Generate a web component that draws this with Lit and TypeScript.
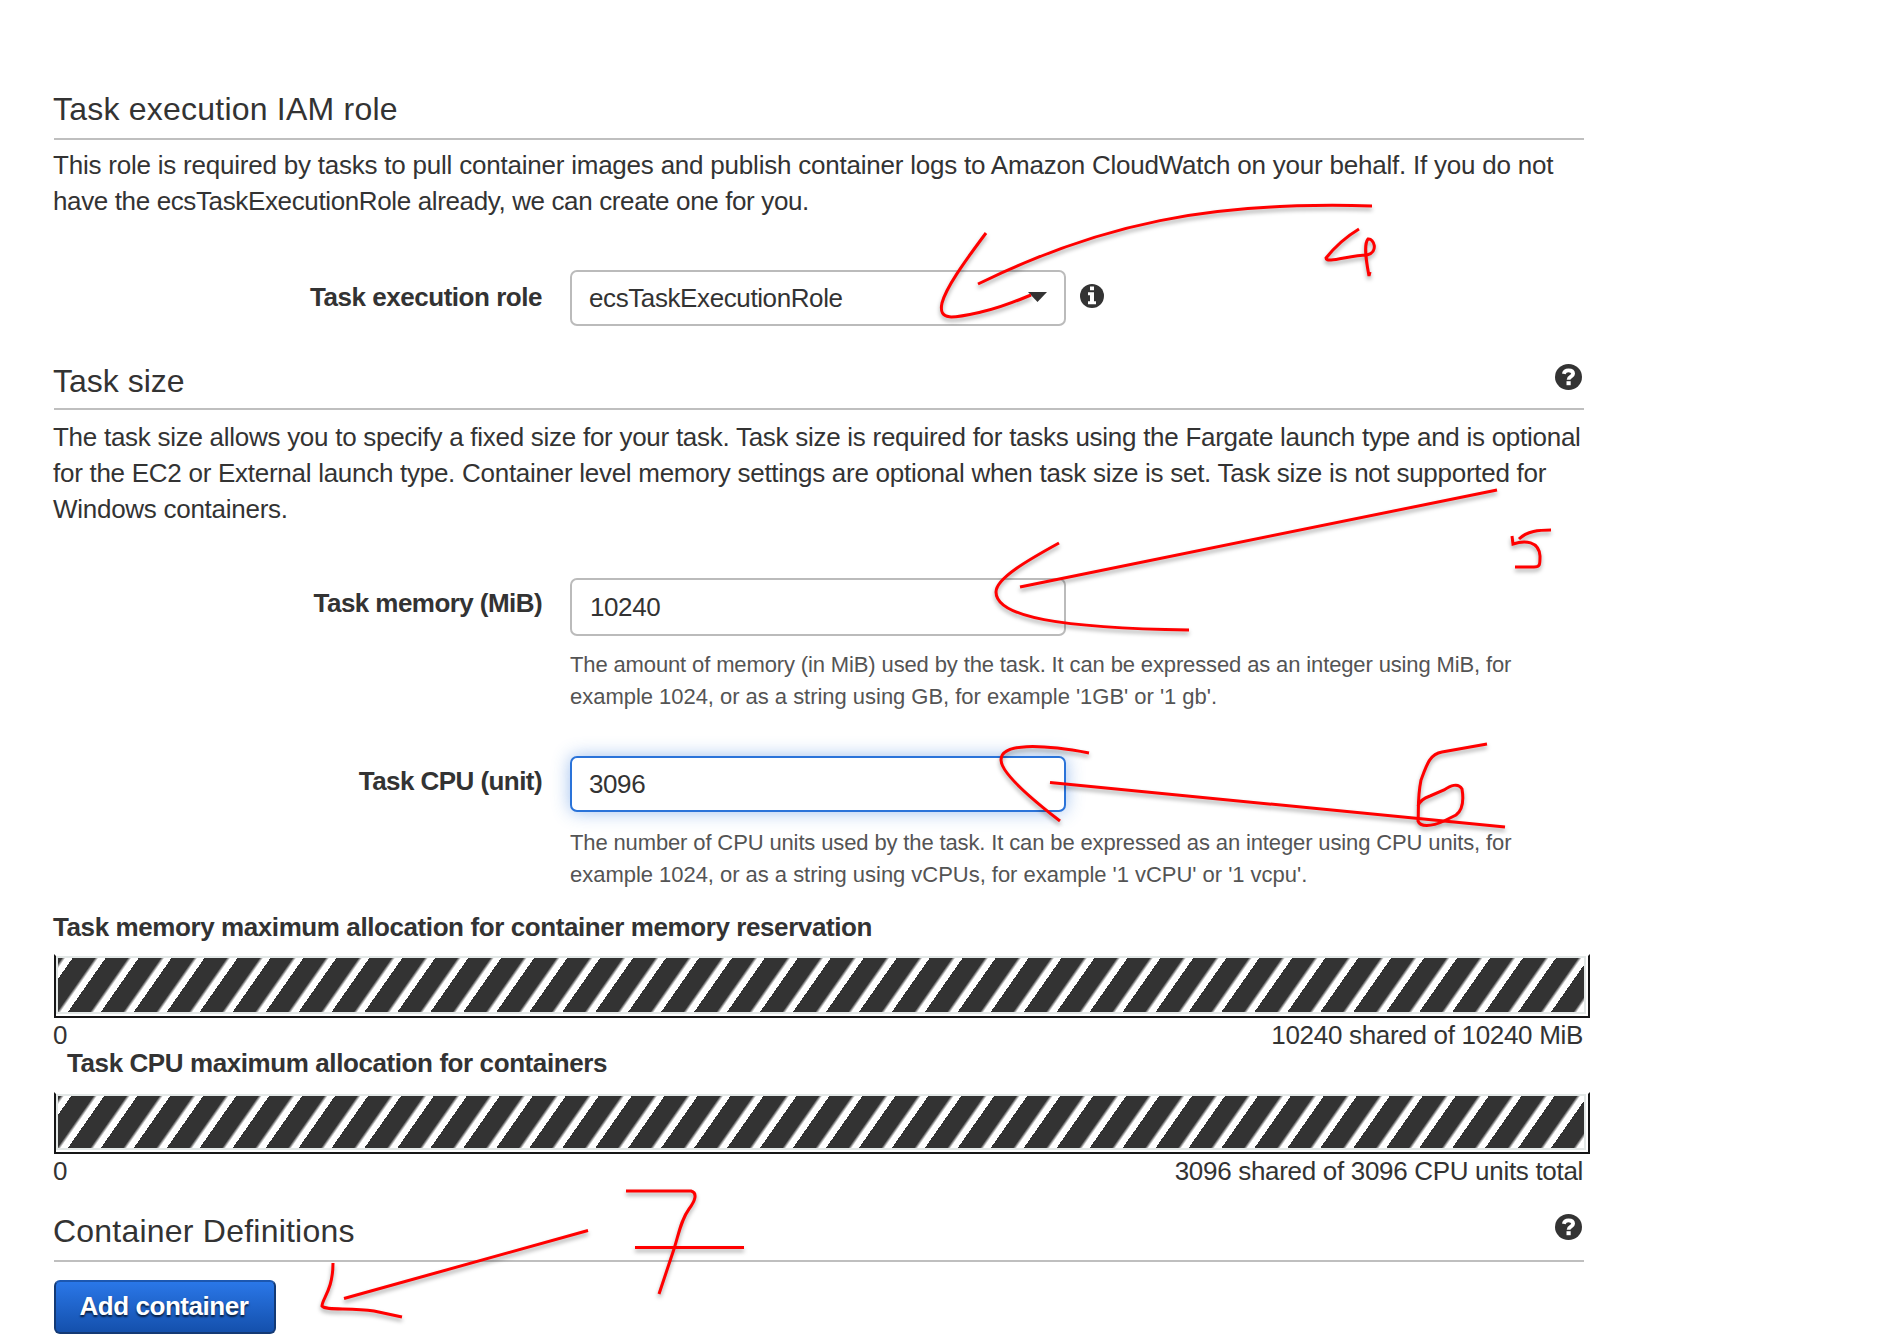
import { LitElement, html, css, svg } from "lit";
import { customElement, property } from "lit/decorators.js";

const infoIcon = html`<svg class="info" viewBox="0 0 24 24" width="24" height="24" aria-hidden="true">
  <circle cx="12" cy="12" r="12" fill="#333" />
  <path fill="#fff" d="M10 2.6h4v3.7h-4zM8 8.2h6v9h2v3H8v-3h2v-6H8z" />
</svg>`;

const helpIcon = html`<svg class="help-icon" viewBox="0 0 27 26" width="27" height="26" aria-hidden="true">
  <ellipse cx="13.5" cy="13" rx="13.500" ry="13" fill="#333" />
  <path fill="none" stroke="#fff" stroke-width="3.8" d="M8.800 9.800C9.300 7.500 11 6.300 13.500 6.300c2.700 0 4.600 1.300 4.600 3.400 0 3.200-4.500 2.800-4.500 6" />
  <path fill="#fff" d="M11.500 17.200h4.200v4h-4.200z" />
</svg>`;

/** Section title with a rule beneath it and an optional help icon. */
@customElement("section-heading")
class SectionHeading extends LitElement {
  @property() label = "";
  @property({ type: Boolean }) help = false;
  static styles = css`
    :host { display: block; }
    .bar {
      display: flex; justify-content: space-between; align-items: flex-start;
      height: var(--bar-height, 47px); box-sizing: border-box; border-bottom: 2px solid #bfbfbf;
    }
    .title { margin: 0 0 0 -1px; font-weight: 400; font-size: 32px; line-height: 32px; letter-spacing: var(--title-spacing, 0.22px); white-space: nowrap; }
    .help-icon { margin: -1px 2px 0 0; }
  `;
  render() {
    return html`<div class="bar"><h2 class="title">${this.label}</h2>${this.help ? helpIcon : ""}</div>`;
  }
}

/** Striped allocation gauge with start and end captions. */
@customElement("allocation-gauge")
class AllocationGauge extends LitElement {
  @property() start = "0";
  @property() end = "";
  static styles = css`
    :host { display: block; }
    .frame {
      box-sizing: border-box; width: 1536px; height: var(--gauge-height, 64px);
      border: 2px solid #161617; border-top: 2px solid transparent; padding: 0 2px 2px 0;
    }
    .fill {
      box-sizing: border-box; height: 100%; border: 2px solid #e3e8e7;
      background: repeating-linear-gradient(-55deg, #fff 0, #fff 5.800px, #333 8.800px, #333 27px) padding-box;
    }
    .caption { display: flex; justify-content: space-between; width: 1530px; margin: -1px 0 0 -1px; line-height: 36px; letter-spacing: -0.31px; }
  `;
  render() {
    return html`<div class="frame"><div class="fill"></div></div>
      <div class="caption"><span>${this.start}</span><span>${this.end}</span></div>`;
  }
}

const strokes = [
  "M986 233C962 265 946 288 942 303C938 322 954 318 981 312C996 309 1012 303 1031 295",
  "M978 284C1100 224 1210 201 1372 206",
  "M1359 229C1344 238 1334 248 1326 258C1326 264 1350 255 1367 255C1379 252 1374 238 1368 239C1363 245 1367 265 1369 276L1370 272",
  "M1059 543C1030 559 996 578 996 592C996 617 1060 628 1189 630",
  "M1020 587L1497 490",
  "M1512 536L1513 544C1525 540 1539 541 1540 556C1540 565 1540 567 1534 567L1515 567M1519 539C1527 531 1539 530 1551 530",
  "M1089 753C1040 744 1001 743 1001 760C1001 772 1025 794 1060 821",
  "M1050 782.500L1505 827",
  "M1487 744L1442 752C1430 754 1427 764 1421 780C1417 800 1419 812 1418 821C1420 827 1431 827 1444 821L1456 815C1465 808 1463 795 1462 789C1458 782 1450 786 1444 790L1430 796C1421 799 1419 803 1418 806",
  "M626 1191L691 1191C698 1193 695 1201 689 1209C681 1220 679 1233 674 1249L659 1294",
  "M635 1247.500L744 1247.500",
  "M333 1263C333 1290 322 1299 322 1306C326 1311 350 1307 374 1311L402 1317",
  "M344 1298.500L588 1230.500",
];

@customElement("app-root")
class AppRoot extends LitElement {
  static styles = css`
    :host {
      display: block; position: relative; width: 1904px; height: 1340px; overflow: hidden;
      background: #fff; color: #333;
      font-family: "Liberation Sans", Arial, sans-serif; font-size: 26px; line-height: 36px;
    }
    .page { display: flow-root; padding: 93px 320px 0 54px; }
    .size-heading { margin-top: 39px; --bar-height: 45px; --title-spacing: 0px; }
    .container-heading { margin-top: 26px; }
    .copy { margin: 7px -20px 0 -1px; white-space: nowrap; }
    .copy.size { margin-top: 9px; }
    .line { display: block; }
    .ls1 { letter-spacing: -0.22px; }
    .ls2 { letter-spacing: -0.37px; }
    .ls3 { letter-spacing: -0.273px; }
    .row { display: grid; grid-template-columns: 488px 496px auto; column-gap: 28px; align-items: start; }
    .row.role { margin-top: 51px; }
    .row.memory { margin-top: 51px; }
    .row.cpu { margin-top: 43px; }
    .label { font-weight: 700; text-align: right; padding-top: 9px; white-space: nowrap; letter-spacing: -0.47px; }
    .label.memory-label, .label.cpu-label { padding-top: 7px; }
    .label.cpu-label, .label.memory-label { letter-spacing: -0.56px; }
    .field {
      box-sizing: border-box; height: 56px; border: 2px solid #bbb; border-radius: 7px;
      padding: 0 17px; display: flex; align-items: center; justify-content: space-between; background: #fff;
      letter-spacing: -0.4px;
    }
    .field.tall { height: 58px; padding-left: 18px; }
    .field.focus { border-color: #2a73d9; box-shadow: 0 0 18px rgba(42, 115, 217, 0.45); }
    .caret { width: 19px; height: 10px; margin-top: -3px; }
    .row .info { margin: 14px 0 0 -14px; }
    .hint { margin: 13px -400px 0 0; color: #545454; font-size: 22px; line-height: 32px; white-space: nowrap; letter-spacing: -0.03px; }
    .hint .first { letter-spacing: -0.13px; }
    .cpu .hint { margin-top: 15px; }
    .meter { font-weight: 700; margin: 18px 0 9px -1px; letter-spacing: -0.41px; }
    .meter.cpu-meter { margin: -8px 0 11px 13px; }
    .cpu-gauge { --gauge-height: 62px; }
    .add {
      display: block; box-sizing: border-box; width: 222px; height: 54px; margin-top: 18px; padding: 0;
      border: 2px solid #143a75; border-top-color: #1c57b0; border-radius: 6px;
      background: linear-gradient(#2a77e8, #1450ac); color: #fff; letter-spacing: -0.45px;
      font: 700 26px/48px "Liberation Sans", Arial, sans-serif; text-shadow: 0 2px 2px rgba(0, 0, 0, 0.7);
      padding: 0 2px 2px 0;
    }
    .ink { position: absolute; left: 0; top: 0; pointer-events: none; filter: drop-shadow(0 3px 2px rgba(0, 0, 0, 0.35)); }
  `;
  render() {
    return html`
      <main class="page">
        <section-heading label="Task execution IAM role"></section-heading>
        <p class="copy">
          <span class="line ls1">This role is required by tasks to pull container images and publish container logs to Amazon CloudWatch on your behalf. If you do not</span>
          <span class="line ls2">have the ecsTaskExecutionRole already, we can create one for you.</span>
        </p>
        <div class="row role">
          <span class="label">Task execution role</span>
          <div class="field"><span>ecsTaskExecutionRole</span>
            <svg class="caret" viewBox="0 0 19 10"><path fill="#333" d="M0 0h19L9.500 10z" /></svg></div>
          ${infoIcon}
        </div>
        <section-heading class="size-heading" label="Task size" help></section-heading>
        <p class="copy size">
          <span class="line ls3">The task size allows you to specify a fixed size for your task. Task size is required for tasks using the Fargate launch type and is optional</span>
          <span class="line ls3">for the EC2 or External launch type. Container level memory settings are optional when task size is set. Task size is not supported for</span>
          <span class="line ls3">Windows containers.</span>
        </p>
        <div class="row memory">
          <span class="label memory-label">Task memory (MiB)</span>
          <div><div class="field tall">10240</div>
            <div class="hint"><span class="line first">The amount of memory (in MiB) used by the task. It can be expressed as an integer using MiB, for</span>
              <span class="line">example 1024, or as a string using GB, for example '1GB' or '1 gb'.</span></div></div>
        </div>
        <div class="row cpu">
          <span class="label cpu-label">Task CPU (unit)</span>
          <div><div class="field focus">3096</div>
            <div class="hint"><span class="line first">The number of CPU units used by the task. It can be expressed as an integer using CPU units, for</span>
              <span class="line">example 1024, or as a string using vCPUs, for example '1 vCPU' or '1 vcpu'.</span></div></div>
        </div>
        <div class="meter">Task memory maximum allocation for container memory reservation</div>
        <allocation-gauge end="10240 shared of 10240 MiB"></allocation-gauge>
        <div class="meter cpu-meter">Task CPU maximum allocation for containers</div>
        <allocation-gauge class="cpu-gauge" end="3096 shared of 3096 CPU units total"></allocation-gauge>
        <section-heading class="container-heading" label="Container Definitions" help></section-heading>
        <button class="add">Add container</button>
      </main>
      <svg class="ink" width="1904" height="1340" viewBox="0 0 1904 1340" fill="none" stroke="#f00" stroke-width="3">
        ${strokes.map((d) => svg`<path d=${d} />`)}
      </svg>
    `;
  }
}
